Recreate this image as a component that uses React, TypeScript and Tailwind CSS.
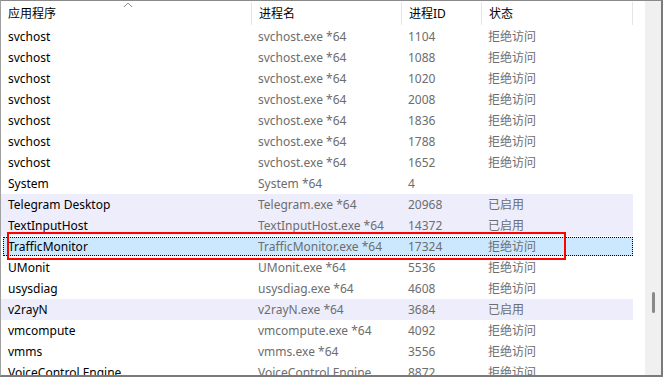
import React from 'react';

type Row = {
    app: string;
    proc: string;
    pid: string;
    status: string;
    tint?: boolean;
    selected?: boolean;
};

const rows: Row[] = [
    { app: 'svchost', proc: 'svchost.exe *64', pid: '1104', status: '拒绝访问' },
    { app: 'svchost', proc: 'svchost.exe *64', pid: '1088', status: '拒绝访问' },
    { app: 'svchost', proc: 'svchost.exe *64', pid: '1020', status: '拒绝访问' },
    { app: 'svchost', proc: 'svchost.exe *64', pid: '2008', status: '拒绝访问' },
    { app: 'svchost', proc: 'svchost.exe *64', pid: '1836', status: '拒绝访问' },
    { app: 'svchost', proc: 'svchost.exe *64', pid: '1788', status: '拒绝访问' },
    { app: 'svchost', proc: 'svchost.exe *64', pid: '1652', status: '拒绝访问' },
    { app: 'System', proc: 'System *64', pid: '4', status: '' },
    { app: 'Telegram Desktop', proc: 'Telegram.exe *64', pid: '20968', status: '已启用', tint: true },
    { app: 'TextInputHost', proc: 'TextInputHost.exe *64', pid: '14372', status: '已启用', tint: true },
    { app: 'TrafficMonitor', proc: 'TrafficMonitor.exe *64', pid: '17324', status: '拒绝访问', selected: true },
    { app: 'UMonit', proc: 'UMonit.exe *64', pid: '5536', status: '拒绝访问' },
    { app: 'usysdiag', proc: 'usysdiag.exe *64', pid: '4608', status: '拒绝访问' },
    { app: 'v2rayN', proc: 'v2rayN.exe *64', pid: '3684', status: '已启用', tint: true },
    { app: 'vmcompute', proc: 'vmcompute.exe *64', pid: '4092', status: '拒绝访问' },
    { app: 'vmms', proc: 'vmms.exe *64', pid: '3556', status: '拒绝访问' },
    { app: 'VoiceControl Engine', proc: 'VoiceControl Engine', pid: '8872', status: '拒绝访问' },
];

const HeaderCell: React.FC<{ width: string; label: string; children?: React.ReactNode }> = ({ width, label, children }) => (
    <div className={`relative flex h-full shrink-0 items-center ${width}`}>
        <span className="flex-1 pl-[7px] text-black">{label}</span>
        <div className="h-[23px] w-px bg-[#e5e5e5]" />
        {children}
    </div>
);

export default function App() {
    return (
        <div
            className="relative h-[377px] w-[663px] overflow-hidden border-t border-l border-r-2 border-b-2 border-t-[#8a8a8a] border-l-[#a0a0a0] border-r-[#7a7a7a] border-b-[#7a7a7a] bg-white text-[12px] leading-[21px]"
            style={{ fontFamily: '"Noto Sans", "Noto Sans CJK SC", sans-serif' }}
        >
            <div className="flex h-full">
                <div className="flex w-[644px] shrink-0 flex-col">
                    {/* header */}
                    <div className="flex h-[25px] shrink-0 items-center">
                        <HeaderCell width="w-[251px]" label="应用程序">
                            <svg className="absolute left-[122px] top-[1px]" width="10" height="6" viewBox="0 0 10 6">
                                <path d="M1 5 L5 1 L9 5" fill="none" stroke="#8f8f8f" strokeWidth="1" />
                            </svg>
                        </HeaderCell>
                        <HeaderCell width="w-[150px]" label="进程名" />
                        <HeaderCell width="w-[80px]" label="进程ID" />
                        <HeaderCell width="w-[151px]" label="状态" />
                    </div>

                    {/* rows */}
                    {rows.map((r, i) => (
                        <div
                            key={i}
                            className={`relative flex h-[21px] w-[632px] shrink-0 items-center ${r.tint ? 'bg-[#ededfc]' : ''}`}
                        >
                            {r.selected && (
                                <span className="absolute top-[1px] bottom-[1px] left-[2px] right-0 border border-dotted border-black bg-[#cce8ff]" />
                            )}
                            <span className="relative w-[251px] shrink-0 whitespace-nowrap pl-[7px] text-black">{r.app}</span>
                            <span className="relative w-[150px] shrink-0 whitespace-nowrap pl-[6px] text-[#6d6d6d]">{r.proc}</span>
                            <span className="relative w-[80px] shrink-0 whitespace-nowrap pl-[6px] text-[#6d6d6d]">{r.pid}</span>
                            <span className="relative w-[151px] shrink-0 whitespace-nowrap pl-[6px] text-[#6d6d6d]">{r.status}</span>
                        </div>
                    ))}
                </div>

                {/* scrollbar */}
                <div className="relative w-[16px] shrink-0 bg-[#f0f0f0]">
                    <div className="absolute left-[7px] top-[291px] h-[21px] w-[3px] rounded-full bg-[#8a8a8a]" />
                </div>
            </div>

            {/* annotation */}
            <div className="pointer-events-none absolute left-[6px] top-[231px] h-[28px] w-[559px] border-2 border-[#ff0000]" />
        </div>
    );
}
